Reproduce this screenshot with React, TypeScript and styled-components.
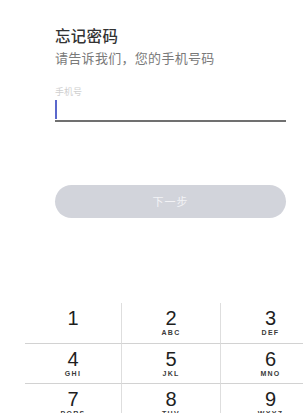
import React from 'react';
import styled, { createGlobalStyle } from 'styled-components';

const GlobalStyle = createGlobalStyle`
  html, body {
    margin: 0;
    padding: 0;
    background: #ffffff;
    overflow: hidden;
  }
  body {
    font-family: "Noto Sans CJK SC", "Noto Sans", sans-serif;
  }
`;

const Page = styled.div`
  width: 303px;
  height: 413px;
  overflow: hidden;
  display: flex;
  flex-direction: column;
`;

const Form = styled.div`
  display: flex;
  flex-direction: column;
  padding: 25px 17px 0 55px;
`;

const Title = styled.div`
  font-size: 15.5px;
  line-height: 20px;
  font-weight: 500;
  color: #333333;
  letter-spacing: 0.3px;
`;

const Subtitle = styled.div`
  margin-top: 3.5px;
  font-size: 13px;
  line-height: 18px;
  color: #7a7a7a;
  letter-spacing: 0.3px;
`;

const Label = styled.div`
  margin-top: 19px;
  font-size: 9px;
  line-height: 12px;
  color: #cfcfcf;
`;

const InputLine = styled.div`
  margin-top: 1.5px;
  height: 21px;
  border-bottom: 2px solid #707070;
  display: flex;
  align-items: flex-start;
`;

const Caret = styled.span`
  margin-top: 1px;
  width: 2px;
  height: 19px;
  background: #5b68cc;
`;

const NextButton = styled.button`
  margin-top: 62.5px;
  height: 33px;
  border: none;
  border-radius: 17px;
  background: #d2d4db;
  color: #f3f3f6;
  font-family: "Noto Sans CJK SC", sans-serif;
  font-size: 11px;
  letter-spacing: 1px;
  padding: 0;
`;

const Keypad = styled.div`
  margin-top: 85px;
  margin-left: 25px;
  width: 295px;
  display: grid;
  grid-template-columns: 96px 99px 100px;
  grid-auto-rows: 40px;
`;

const Key = styled.div<{ $col: number; $row: number }>`
  display: flex;
  flex-direction: column;
  align-items: center;
  padding-top: 5px;
  box-sizing: border-box;
  border-left: ${p => (p.$col > 0 ? '1px solid #dedede' : 'none')};
  border-top: ${p => (p.$row > 0 ? '1px solid #d2d2d2' : 'none')};
  font-family: "Liberation Sans", Arial, sans-serif;
`;

const Digit = styled.span`
  font-size: 20px;
  line-height: 20px;
  color: #1e1e1e;
`;

const Letters = styled.span`
  margin-top: 1px;
  font-size: 7px;
  line-height: 8px;
  font-weight: 700;
  letter-spacing: 1.3px;
  color: #3a3a3a;
`;

const keys = [
  ['1', ''],
  ['2', 'ABC'],
  ['3', 'DEF'],
  ['4', 'GHI'],
  ['5', 'JKL'],
  ['6', 'MNO'],
  ['7', 'PQRS'],
  ['8', 'TUV'],
  ['9', 'WXYZ'],
];

export default function App() {
  return (
    <Page>
      <GlobalStyle />
      <Form>
        <Title>忘记密码</Title>
        <Subtitle>请告诉我们，您的手机号码</Subtitle>
        <Label>手机号</Label>
        <InputLine>
          <Caret />
        </InputLine>
        <NextButton>下一步</NextButton>
      </Form>
      <Keypad>
        {keys.map(([d, l], i) => (
          <Key key={d} $col={i % 3} $row={Math.floor(i / 3)}>
            <Digit>{d}</Digit>
            {l && <Letters>{l}</Letters>}
          </Key>
        ))}
      </Keypad>
    </Page>
  );
}
